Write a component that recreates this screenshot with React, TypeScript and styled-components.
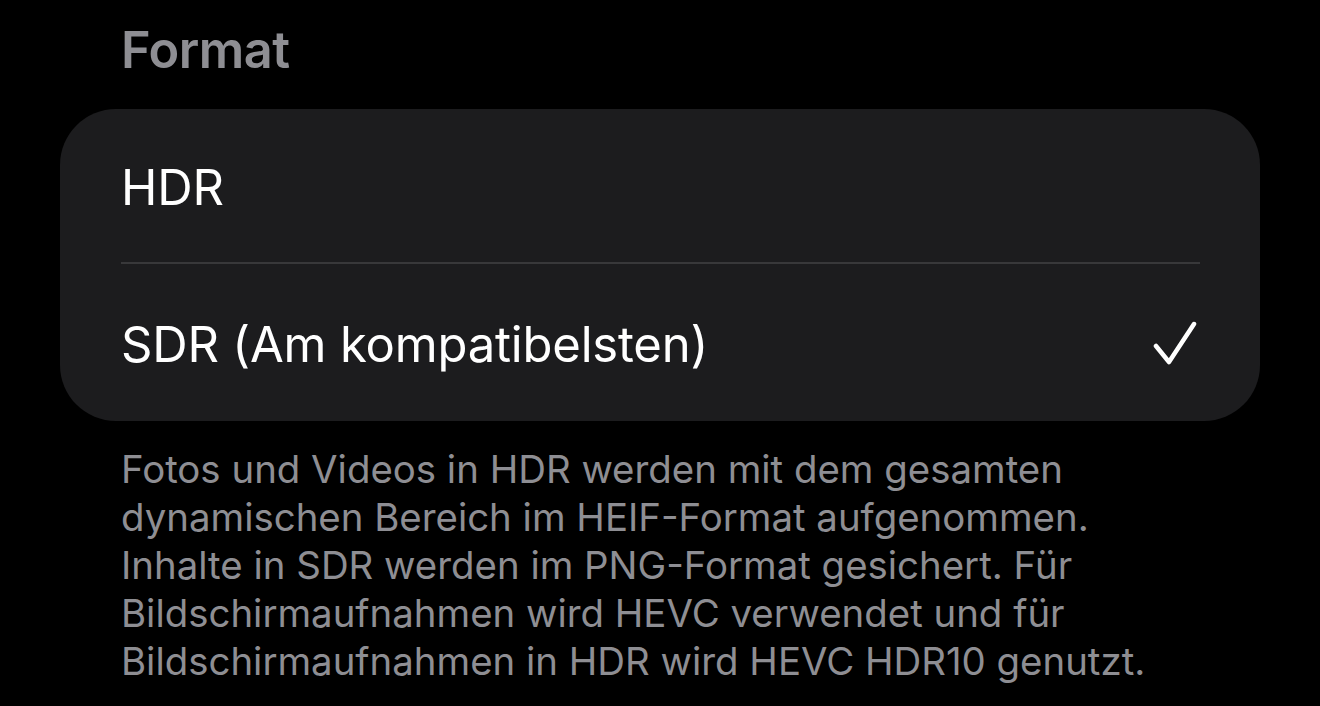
import React from 'react';
import styled, { createGlobalStyle } from 'styled-components';

const GlobalStyle = createGlobalStyle`
  html, body {
    margin: 0;
    padding: 0;
    background: #000;
  }
  body {
    font-family: Inter, "Noto Sans", "Liberation Sans", sans-serif;
    -webkit-font-smoothing: antialiased;
  }
`;

const Page = styled.div`
  width: 1320px;
  height: 706px;
  overflow: hidden;
  background: #000;
  padding: 20px 60px 0;
  box-sizing: border-box;
`;

const SectionTitle = styled.h2`
  margin: 0 0 0 61px;
  font-size: 50.5px;
  line-height: 60px;
  font-weight: 600;
  color: #8e8e93;
  letter-spacing: -0.5px;
`;

const Group = styled.div`
  margin-top: 29px;
  background: #1c1c1e;
  border-radius: 56px;
  overflow: hidden;
`;

const Row = styled.div<{ $divider?: boolean }>`
  display: flex;
  align-items: center;
  justify-content: space-between;
  height: ${({ $divider }) => ($divider ? '155px' : '157px')};
  padding-top: 4px;
  margin: 0 60px 0 61px;
  box-sizing: border-box;
  border-bottom: ${({ $divider }) => ($divider ? '2px solid #38383a' : 'none')};
`;

const RowLabel = styled.span`
  font-size: 49px;
  color: #fff;
  font-weight: 400;
  letter-spacing: -0.2px;
`;

const Footer = styled.p`
  margin: 24px 60px 0 61px;
  font-size: 38.4px;
  line-height: 48px;
  color: #8e8e93;
`;

const Check = () => (
  <svg width="48" height="48" viewBox="0 0 48 48" fill="none">
    <path
      d="M4 25 L17 41 L42 3"
      stroke="#fff"
      strokeWidth="4.5"
      strokeLinecap="round"
      strokeLinejoin="round"
    />
  </svg>
);

const options = [
  { label: 'HDR', selected: false },
  { label: 'SDR (Am kompatibelsten)', selected: true },
];

export default function App() {
  return (
    <>
      <GlobalStyle />
      <Page>
        <SectionTitle>Format</SectionTitle>
        <Group>
          {options.map((o, i) => (
            <Row key={o.label} $divider={i < options.length - 1}>
              <RowLabel>{o.label}</RowLabel>
              {o.selected && <Check />}
            </Row>
          ))}
        </Group>
        <Footer>
          Fotos und Videos in HDR werden mit dem gesamten dynamischen Bereich im HEIF-Format
          aufgenommen. Inhalte in SDR werden im PNG-Format gesichert. Für Bildschirmaufnahmen
          wird HEVC verwendet und für Bildschirmaufnahmen in HDR wird HEVC HDR10 genutzt.
        </Footer>
      </Page>
    </>
  );
}
